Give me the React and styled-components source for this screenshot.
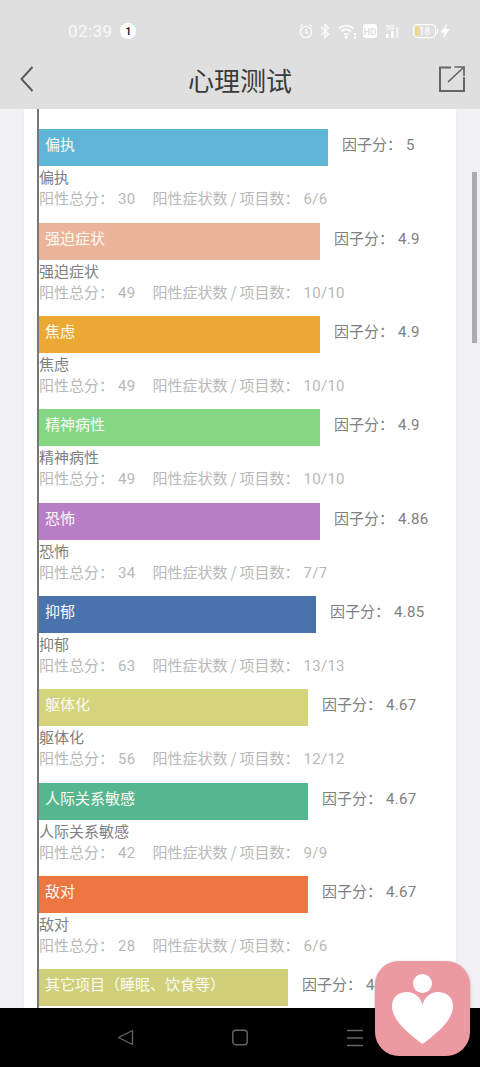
import React from "react";
import styled, { createGlobalStyle } from "styled-components";

const Global = createGlobalStyle`
  html, body { margin: 0; padding: 0; background: #f1f1f3; }
  * { box-sizing: border-box; }
`;
const FONT = `"Noto Sans CJK SC", "Noto Sans", sans-serif`;
const COLON = "\uFF1A";

const Screen = styled.div`
  position: relative; width: 480px; height: 1067px; overflow: hidden;
  display: flex; flex-direction: column; font-family: ${FONT}; background: #f1f1f3;
`;
const Top = styled.header`background: #dfdfdf; height: 109px; flex: none; display: flex; flex-direction: column;`;
const StatusBar = styled.div`
  height: 62px; flex: none; display: flex; align-items: center; padding: 0 28px 0 68px; color: #fff;
`;
const Time = styled.span`font-family: Roboto, sans-serif; font-size: 17px; letter-spacing: .4px; color: #f7f7f7;`;
const Badge = styled.span`
  width: 16px; height: 16px; border-radius: 50%; background: #fff; color: #222; margin-left: 8px;
  font-family: Roboto, sans-serif; font-size: 10px; font-weight: 700; display: flex; align-items: center; justify-content: center;
`;
const StatusIcons = styled.div`margin-left: auto; display: flex; align-items: center; height: 20px;`;
const NavTitleBar = styled.div`
  flex: 1; display: flex; align-items: flex-start; justify-content: space-between; padding: 4px 15px 0 20px; position: relative;
`;
const Title = styled.h1`
  position: absolute; left: 0; right: 0; top: 0; margin: 0; text-align: center; font-weight: 400;
  font-size: 26px; line-height: 36px; color: #3a3a3a;
`;
const Content = styled.main`flex: 1; min-height: 0; overflow: hidden; padding: 0 24px;`;
const Card = styled.section`
  background: #fff; height: 100%; padding: 0 0 0 13px; box-shadow: 0 0 2px rgba(0,0,0,.06);
`;
const Chart = styled.div`border-left: 2px solid #777; height: 100%; padding-top: 20.4px; overflow: hidden;`;
const Row = styled.div`height: 93.33px;`;
const BarLine = styled.div`display: flex; align-items: center; height: 37px;`;
const Bar = styled.div`
  width: ${p => p.$w}px; height: 37px; background: ${p => p.$c}; color: #fbfbf4; flex: none;
  font-size: 15px; line-height: 30px; padding-left: 6px; white-space: nowrap;
`;
const Factor = styled.div`margin-left: 14px; font-size: 15px; line-height: 30px; height: 37px; color: #808080; white-space: nowrap;`;
const Num = styled.span`font-family: Roboto, sans-serif; margin-left: 4px; letter-spacing: .3px;`;
const Slash = styled.span`margin: 0 3px;`;
const Name = styled.div`font-size: 15px; line-height: 21px; height: 21px; color: #808080;`;
const Stats = styled.div`font-size: 15px; line-height: 21px; height: 21px; color: #b8b8b8; white-space: nowrap;`;
const Stat = styled.span`margin-right: 17px;`;
const BottomNav = styled.nav`flex: none; height: 59px; background: #000;`;
const NavSlot = styled.div`position: absolute; left: ${p => p.$x}px; top: 1029px; line-height: 0;`;
const ScrollThumb = styled.div`
  position: absolute; left: 472px; top: 172px; width: 5px; height: 171px; background: #acacac;
`;
const Floating = styled.div`
  position: absolute; left: 375px; top: 961px; width: 95px; height: 95px; border-radius: 24px;
  background: #ec9aa1; box-shadow: 0 1px 3px rgba(0,0,0,.3); line-height: 0;
`;

const data = [
  ["偏执", 289, "#5fb5d5", "5", "30", "6/6"],
  ["强迫症状", 281, "#ecb39b", "4.9", "49", "10/10"],
  ["焦虑", 281, "#eba835", "4.9", "49", "10/10"],
  ["精神病性", 281, "#84d884", "4.9", "49", "10/10"],
  ["恐怖", 281, "#b87fc8", "4.86", "34", "7/7"],
  ["抑郁", 277, "#4a73ad", "4.85", "63", "13/13"],
  ["躯体化", 269, "#d4d47c", "4.67", "56", "12/12"],
  ["人际关系敏感", 269, "#56b68f", "4.67", "42", "9/9"],
  ["敌对", 269, "#ee7640", "4.67", "28", "6/6"],
  ["其它项目\uFF08睡眠、饮食等\uFF09", 249, "#d0d07a", "4.6", "", ""],
];

const StatusSvg = () => (
  <svg width="155" height="20" viewBox="0 0 155 20" fill="none">
    <g stroke="#fff" strokeWidth="1.4" opacity=".92">
      <circle cx="9" cy="11" r="5.6" />
      <path d="M9 8v3.2l2 1.2M3 5.500l2.500-2M15 5.500l-2.500-2" />
      <path d="M24 6l7.500 7-3.500 3.500V3.500L31.500 7 24 14" />
    </g>
    <g stroke="#fff" strokeWidth="1.700" fill="none" opacity=".92">
      <path d="M42 7.500c4.500-4 10-4 14.500 0" />
      <path d="M44.500 10.500c3-2.600 6.500-2.600 9.500 0" />
      <path d="M47 13.500c1.500-1 3-1 4.500 0" />
    </g>
    <circle cx="49.200" cy="16.300" r="1.500" fill="#fff" />
    <rect x="57" y="12" width="2" height="2" fill="#fff" /><rect x="57" y="15.500" width="2" height="2" fill="#fff" />
    <rect x="66" y="3" width="14" height="14" rx="3" fill="#fff" />
    <text x="73" y="13.500" textAnchor="middle" fontSize="9.500" fontWeight="700" fill="#dfdfdf" fontFamily="Roboto">HD</text>
    <text x="93" y="8.500" fontSize="7" textAnchor="middle" fill="#fff" fontFamily="Roboto">5G</text>
    <g fill="#fff">
      <rect x="89" y="13" width="2.400" height="4" /><rect x="94" y="10" width="2.600" height="7" /><rect x="99" y="6" width="2.600" height="11" opacity=".6" />
    </g>
    <rect x="116.600" y="3.600" width="22" height="13" rx="4" stroke="#fff" strokeWidth="1.200" opacity=".95" />
    <rect x="118" y="5" width="4" height="10" rx="1.500" fill="#f0d890" />
    <path d="M140.500 8v4" stroke="#fff" strokeWidth="1.400" />
    <text x="127.500" y="14" textAnchor="middle" fontSize="10" fill="#fff" fontFamily="Roboto">18</text>
    <path d="M150.500 2l-7 9.500h3.800L146 18l6.500-10h-4z" fill="#fff" />
  </svg>
);

export default function App() {
  return (
    <Screen>
      <Global />
      <Top>
        <StatusBar>
          <Time>02:39</Time>
          <Badge>1</Badge>
          <StatusIcons><StatusSvg /></StatusIcons>
        </StatusBar>
        <NavTitleBar>
          <svg width="14" height="26" viewBox="0 0 14 26" fill="none">
            <path d="M12.500 1L1.500 13l11 12" stroke="#5a5a5a" strokeWidth="1.900" />
          </svg>
          <Title>心理测试</Title>
          <svg width="26" height="26" viewBox="0 0 26 26" fill="none" stroke="#666" strokeWidth="2">
            <path d="M12 1.500H1v23.500h24V11" />
            <path d="M9 16L24 2M15.500 1h9.500v9" strokeWidth="1.700" />
          </svg>
        </NavTitleBar>
      </Top>
      <Content>
        <Card>
          <Chart>
            {data.map(([name, w, c, score, total, ratio]) => (
              <Row key={name}>
                <BarLine>
                  <Bar $w={w} $c={c}>{name}</Bar>
                  <Factor>因子分{COLON}<Num>{score}</Num></Factor>
                </BarLine>
                {total && <Name>{name}</Name>}
                {total && (
                  <Stats>
                    <Stat>阳性总分{COLON}<Num>{total}</Num></Stat>
                    <span>阳性症状数<Slash>/</Slash>项目数{COLON}<Num>{ratio}</Num></span>
                  </Stats>
                )}
              </Row>
            ))}
          </Chart>
        </Card>
      </Content>
      <BottomNav />
      <NavSlot $x={117}>
        <svg width="17" height="17" viewBox="0 0 17 17" fill="none" stroke="#666" strokeWidth="1.300" strokeLinejoin="round">
          <path d="M15.500 1.500v14L1.500 8.500z" />
        </svg>
      </NavSlot>
      <NavSlot $x={232}>
        <svg width="16" height="17" viewBox="0 0 16 17" fill="none" stroke="#666" strokeWidth="1.400">
          <rect x=".8" y="1.300" width="14.400" height="14.400" rx="3" />
        </svg>
      </NavSlot>
      <NavSlot $x={346}>
        <svg width="18" height="18" viewBox="0 0 18 18" fill="none" stroke="#666" strokeWidth="1.300">
          <path d="M1 1.500h16M1 9h16M1 16.500h16" />
        </svg>
      </NavSlot>
      <ScrollThumb />
      <Floating>
        <svg width="95" height="95" viewBox="0 0 95 95">
          <circle cx="47.500" cy="22.500" r="9.500" fill="#fff" />
          <path fill="#fff" d="M47.500 83C30 70 17 58 17 45C17 36 24 31 32 31C40 31 46 37 47.500 44C49 37 55 31 63 31C71 31 78 36 78 45C78 58 65 70 47.500 83Z" />
        </svg>
      </Floating>
    </Screen>
  );
}
